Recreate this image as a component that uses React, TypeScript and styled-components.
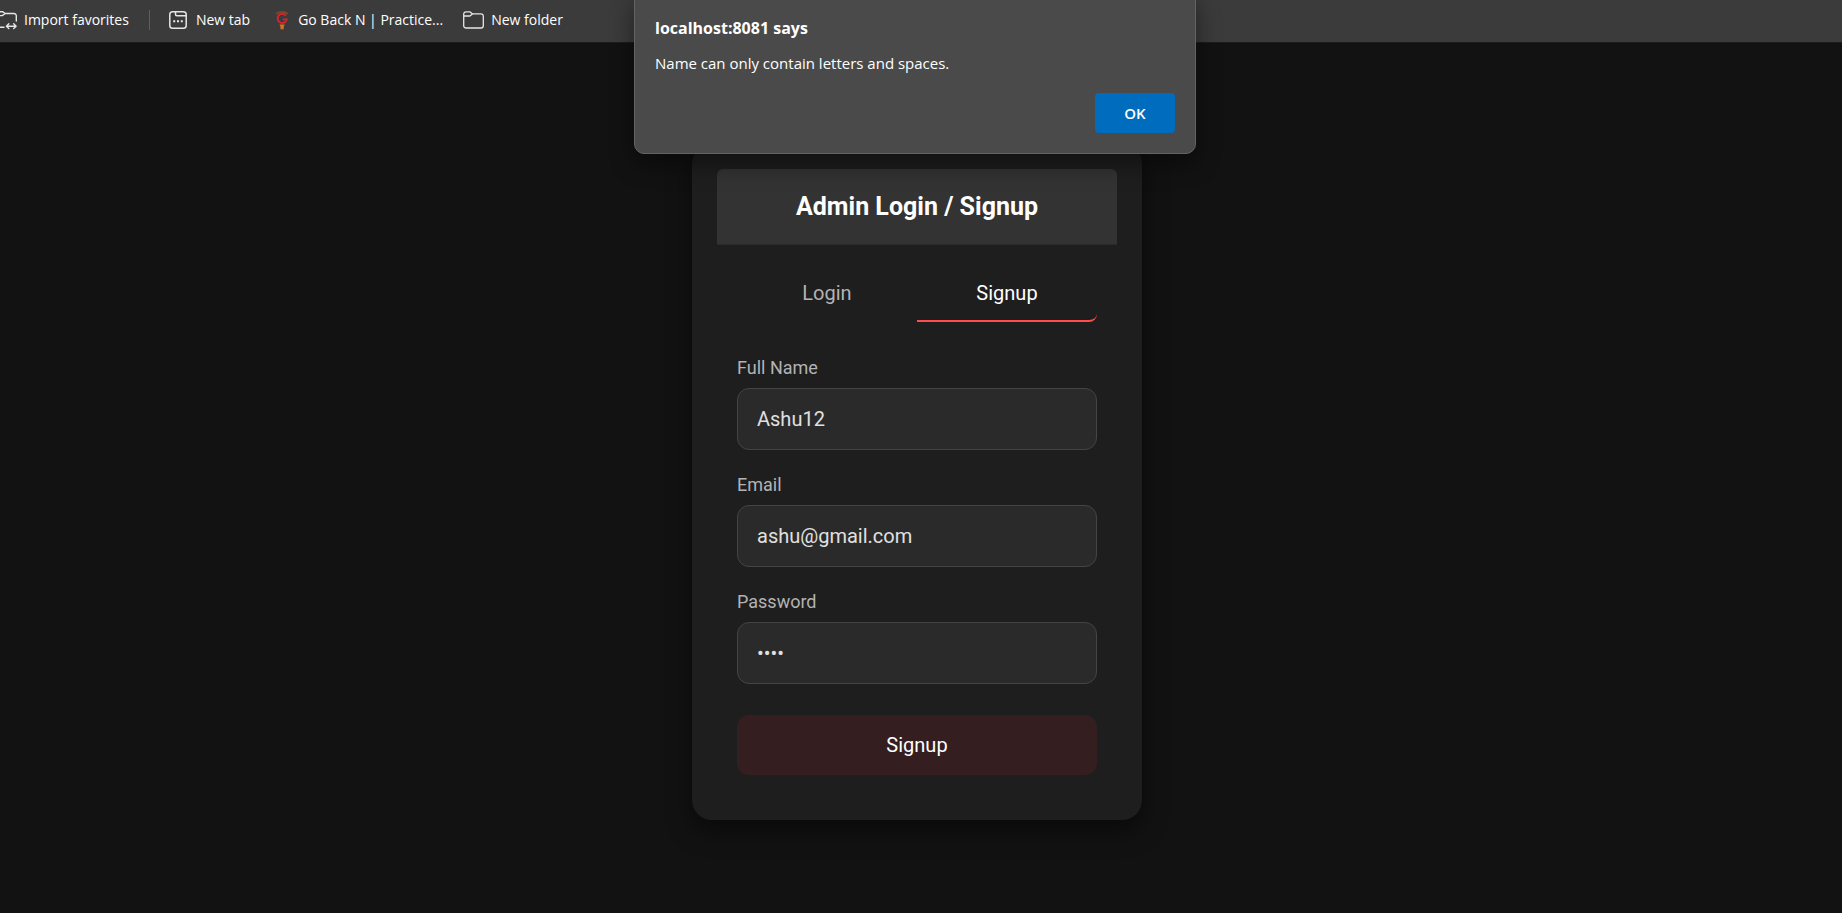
import React, { useState } from "react";
import styled, { createGlobalStyle } from "styled-components";

const browserFont = `"Segoe UI", "Open Sans", "Noto Sans", sans-serif`;

const GlobalStyle = createGlobalStyle`
  *, *::before, *::after { box-sizing: border-box; }
  body { margin: 0; background: #121212; font-family: Roboto, sans-serif; }
  button, input { font-family: inherit; }
`;

const Page = styled.div`
  position: relative;
  min-height: 100vh;
  display: flex;
  flex-direction: column;
`;

const BookmarksBar = styled.nav`
  display: flex;
  align-items: center;
  height: 43px;
  padding-bottom: 3px;
  background: #3b3b3b;
  border-bottom: 1px solid #1c1c1c;
  font-family: ${browserFont};
  overflow: hidden;
`;

const Bookmark = styled.a<{ $gap: number; $after?: number }>`
  display: flex;
  align-items: center;
  gap: ${(p) => p.$gap}px;
  margin-right: ${(p) => p.$after ?? 20}px;
  color: #fff;
  font-size: 14px;
  line-height: 20px;
  text-decoration: none;
  white-space: nowrap;

  svg { flex: none; display: block; }
`;

const Divider = styled.span`
  width: 1px;
  height: 20px;
  margin-right: 19px;
  background: #5e5e5e;
`;

const Main = styled.main`
  flex: 1;
  display: flex;
  justify-content: center;
  align-items: flex-start;
  padding: 101px 20px 40px;
`;

const Card = styled.section`
  width: 100%;
  max-width: 450px;
  margin-right: 8px;
  padding: 25px;
  border-radius: 20px;
  background: #1e1e1e;
  box-shadow: 0 10px 25px rgba(0, 0, 0, 0.5);
`;

const CardHeader = styled.header`
  padding: 20px;
  background: #333;
  border-bottom: 1px solid #2a2a2a;
  border-radius: 6px 6px 0 0;
  text-align: center;
`;

const Title = styled.h1`
  margin: 0;
  color: #fff;
  font-size: 25px;
  font-weight: 700;
  line-height: 35px;
`;

const CardBody = styled.div`
  padding: 20px;
`;

const Tabs = styled.div`
  display: flex;
  margin-bottom: 35px;
`;

const Tab = styled.button<{ $active: boolean }>`
  flex: 1;
  height: 57px;
  padding: 0;
  border: 0 solid transparent;
  border-bottom: 2px solid ${(p) => (p.$active ? "#ff4d4d" : "transparent")};
  border-radius: ${(p) => (p.$active ? "0 8px 8px 0" : "8px 0 0 8px")};
  background: none;
  color: ${(p) => (p.$active ? "#fff" : "#b3b3b3")};
  font-size: 20px;
  line-height: 30px;
`;

const Field = styled.div`
  display: flex;
  flex-direction: column;
  gap: 9px;
  margin-bottom: 24px;
`;

const Label = styled.label`
  color: #b3b3b3;
  font-size: 18px;
  line-height: 22px;
`;

const Input = styled.input`
  width: 100%;
  height: 62px;
  padding: 0 19px;
  border: 1px solid #444;
  border-radius: 12px;
  outline: none;
  background: #2a2a2a;
  color: #e0e0e0;
  font-size: 20px;
`;

const Submit = styled.button`
  width: 100%;
  height: 60px;
  margin-top: 7px;
  border: 0;
  border-radius: 12px;
  background: #351e20;
  color: #fff;
  font-size: 20px;
`;

const AlertBox = styled.div`
  position: absolute;
  top: -9px;
  left: 50%;
  width: 562px;
  max-width: 100%;
  margin-left: -287px;
  padding: 25px 20px 20px;
  border: 1px solid #636363;
  border-radius: 10px;
  background: #4a4a4a;
  box-shadow: 0 10px 24px rgba(0, 0, 0, 0.45);
  color: #fff;
  font-family: ${browserFont};
`;

const AlertTitle = styled.h2`
  margin: 0 0 13px;
  font-size: 16px;
  font-weight: 700;
  line-height: 22px;
`;

const AlertText = styled.p`
  margin: 0 0 19px;
  font-size: 15px;
  line-height: 22px;
`;

const AlertActions = styled.div`
  display: flex;
  justify-content: flex-end;
`;

const AlertButton = styled.button`
  width: 80px;
  height: 40px;
  padding: 0;
  border: 0;
  border-radius: 4px;
  background: #006cbe;
  color: #fff;
  font-size: 15px;
  font-weight: 600;
`;

const ImportIcon = () => (
  <svg width="17" height="20" viewBox="0 0 17 20" fill="none" stroke="#e6e6e6" strokeWidth="1.4" strokeLinecap="round" strokeLinejoin="round">
    <path d="M-3 1.7h5.5L5.3 3.5H14a2.3 2.3 0 0 1 2.3 2.3V11M-3 5.6h5.2L5.3 3.5M-3 17.3h7" />
    <path d="M6.5 16.2H16M8.8 13.8l-2.4 2.4 2.4 2.4M13.7 13.8l2.4 2.4-2.4 2.4" />
  </svg>
);

const TabIcon = () => (
  <svg width="18" height="18" viewBox="0 0 18 18" fill="none" stroke="#e6e6e6" strokeWidth="1.5">
    <rect x=".8" y=".8" width="16.4" height="16.4" rx="2.8" />
    <path d="M6.500 1v2.300a1.500 1.500 0 0 0 1.500 1.500h9" />
    <path d="M4.200 10.300h2M8 10.300h2M11.800 10.300h2" strokeWidth="2" />
  </svg>
);

const GateIcon = () => (
  <svg width="14" height="20" viewBox="0 0 14 20" fill="none">
    <path d="M1 4C3.500 1.200 10.500 1.200 13 4" stroke="#7a4a22" strokeWidth="1.600" />
    <path d="M10.900 5.600A4.600 4.600 0 1 0 11.700 9.400H7.600" stroke="#d8232f" strokeWidth="1.900" />
    <path d="M4.500 14.600h5.200l-1 2.200v2.400H5.500v-2.400z" fill="#d9731a" />
  </svg>
);

const FolderIcon = () => (
  <svg width="21" height="18" viewBox="0 0 21 18" fill="none" stroke="#e6e6e6" strokeWidth="1.300" strokeLinejoin="round">
    <path d="M.7 3.200A2.300 2.300 0 0 1 3 .9h4.200l2.300 2H18a2.300 2.300 0 0 1 2.300 2.300v9.500a2.300 2.300 0 0 1-2.300 2.300H3a2.300 2.300 0 0 1-2.300-2.300z" />
    <path d="M.9 5h6l2.600-2.100" />
  </svg>
);

export default function App() {
  const [name, setName] = useState("Ashu12");
  const [email, setEmail] = useState("ashu@gmail.com");
  const [password, setPassword] = useState("1234");

  return (
    <Page>
      <GlobalStyle />
      <BookmarksBar aria-label="Favorites">
        <Bookmark href="#import" $gap={7}><ImportIcon />Import favorites</Bookmark>
        <Divider />
        <Bookmark href="#new-tab" $gap={9} $after={25}><TabIcon />New tab</Bookmark>
        <Bookmark href="#practice" $gap={9}><GateIcon />Go Back N | Practice...</Bookmark>
        <Bookmark href="#folder" $gap={7}><FolderIcon />New folder</Bookmark>
      </BookmarksBar>
      <Main>
        <Card>
          <CardHeader>
            <Title>Admin Login / Signup</Title>
          </CardHeader>
          <CardBody>
            <Tabs role="tablist">
              <Tab type="button" role="tab" aria-selected={false} $active={false}>Login</Tab>
              <Tab type="button" role="tab" aria-selected $active>Signup</Tab>
            </Tabs>
            <form onSubmit={(e) => e.preventDefault()}>
              <Field>
                <Label htmlFor="name">Full Name</Label>
                <Input id="name" value={name} onChange={(e) => setName(e.target.value)} />
              </Field>
              <Field>
                <Label htmlFor="email">Email</Label>
                <Input id="email" type="email" value={email} onChange={(e) => setEmail(e.target.value)} />
              </Field>
              <Field>
                <Label htmlFor="password">Password</Label>
                <Input id="password" type="password" value={password} onChange={(e) => setPassword(e.target.value)} />
              </Field>
              <Submit type="submit">Signup</Submit>
            </form>
          </CardBody>
        </Card>
      </Main>
      <AlertBox role="alertdialog" aria-labelledby="alert-title" aria-describedby="alert-text">
        <AlertTitle id="alert-title">localhost:8081 says</AlertTitle>
        <AlertText id="alert-text">Name can only contain letters and spaces.</AlertText>
        <AlertActions>
          <AlertButton type="button">OK</AlertButton>
        </AlertActions>
      </AlertBox>
    </Page>
  );
}
